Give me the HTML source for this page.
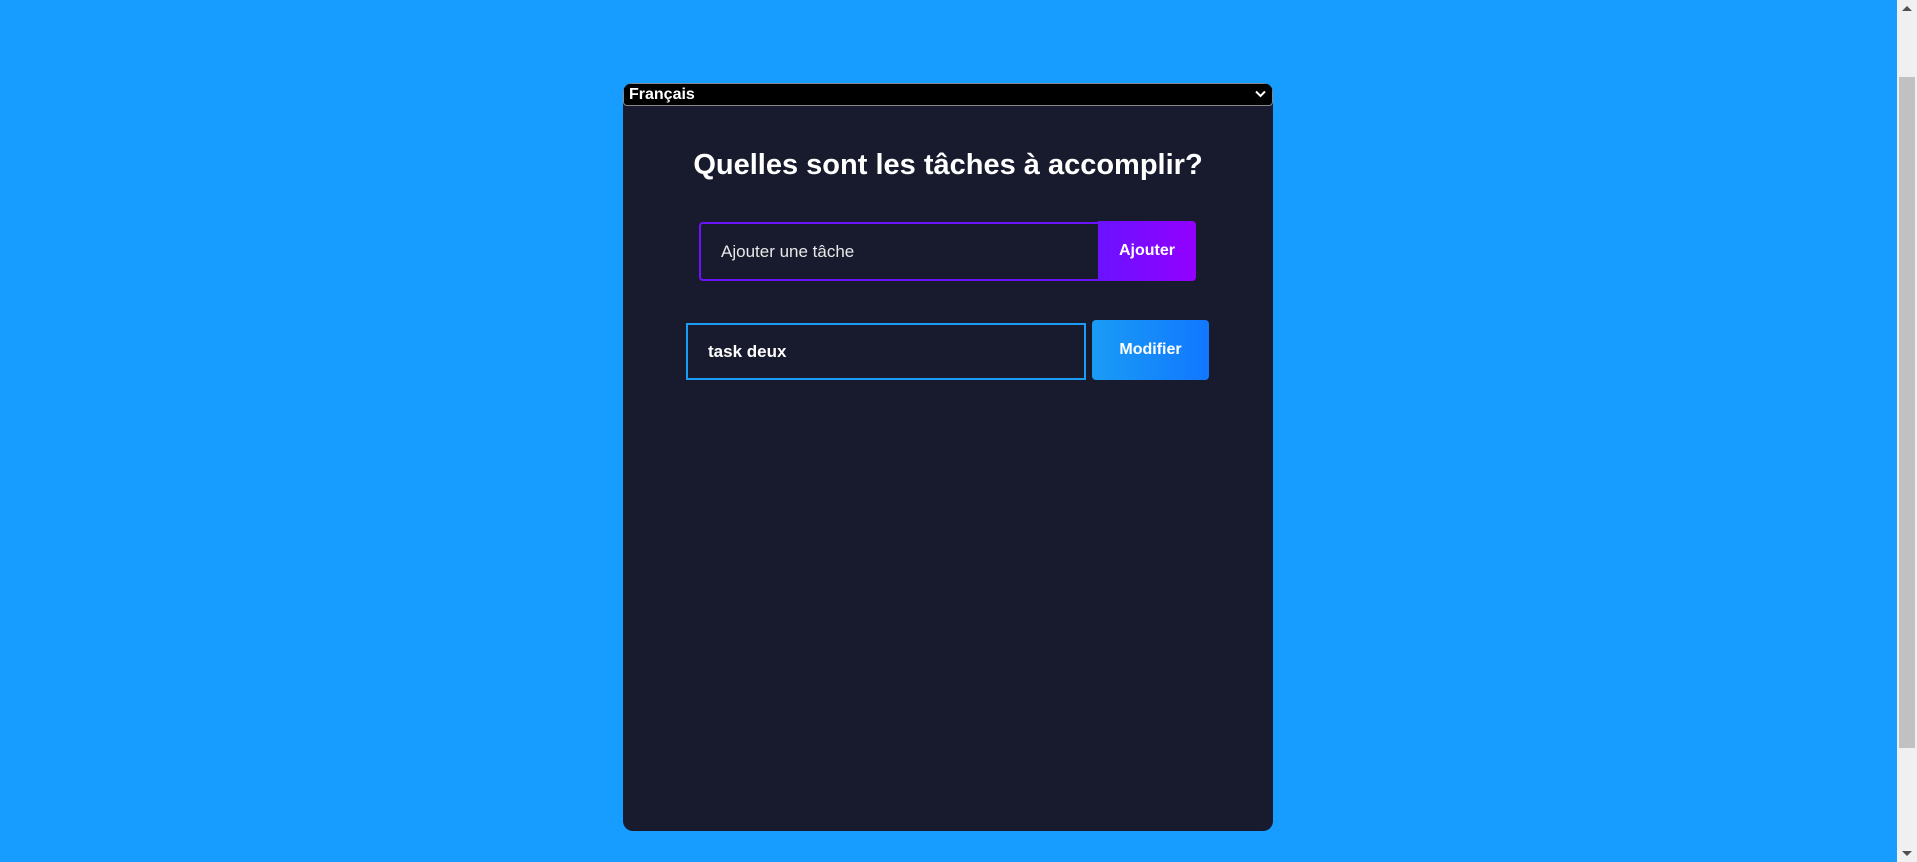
<!DOCTYPE html>
<html><head><meta charset="utf-8"><style>
html,body{margin:0;padding:0;width:1917px;height:862px;overflow:hidden;background:#169dff;font-family:"Trebuchet MS","Liberation Sans",sans-serif;}
.sb{position:absolute;left:1897px;top:0;width:20px;height:862px;background:#f0f0f0}
.thumb{position:absolute;left:2px;top:77px;width:16px;height:671px;background:#c1c1c1}
.card{position:absolute;left:623px;top:83px;width:650px;height:748px;background:#181b2d;border-radius:10px;overflow:hidden}
.sel{position:absolute;left:0;top:0;height:21px;background:#000;border:1px solid #888;border-radius:4px;color:#fff;font-size:16px;font-weight:bold;line-height:21px;padding-left:5px;width:643px}
h1{position:absolute;left:0;width:650px;top:64px;margin:0;text-align:center;color:#fff;font-size:29px;line-height:36px;font-weight:bold}
.in{position:absolute;box-sizing:border-box;color:#e8e8e8;font-size:17px;padding-left:20px}
</style></head><body>
<div class="card">
<div class="sel">Français<svg style="position:absolute;right:6px;top:6px" width="11" height="8" viewBox="0 0 11 8"><path d="M1 1.5 L5.5 6 L10 1.5" stroke="#fff" stroke-width="2" fill="none"/></svg></div>
<h1>Quelles sont les tâches à accomplir?</h1>
<div class="in" style="left:76px;top:139px;width:400px;height:59px;border:2px solid #6b12ff;border-right:none;border-radius:4px 0 0 4px;line-height:55px">Ajouter une tâche</div>
<div class="in" style="left:475px;top:138px;width:98px;height:60px;background:linear-gradient(90deg,#6a12ff,#9300ff);border-radius:0 4px 4px 0;color:#fff;padding:0;text-align:center;line-height:60px;font-weight:bold;font-size:16px">Ajouter</div>
<div class="in" style="left:63px;top:240px;width:400px;height:57px;border:2px solid #1a9cf5;line-height:53px;color:#fff;font-weight:bold">task deux</div>
<div class="in" style="left:469px;top:237px;width:117px;height:60px;background:linear-gradient(90deg,#1a9cf5,#1177ff);border-radius:4px;color:#fff;padding:0;text-align:center;line-height:60px;font-weight:bold;font-size:16px">Modifier</div>
</div>
<div class="sb"><div class="thumb"></div>
<svg style="position:absolute;left:5px;top:6px" width="10" height="5"><path d="M0 5L5 0L10 5Z" fill="#505050"/></svg>
<svg style="position:absolute;left:5px;top:851px" width="10" height="5"><path d="M0 0L5 5L10 0Z" fill="#505050"/></svg></div>
</body></html>
